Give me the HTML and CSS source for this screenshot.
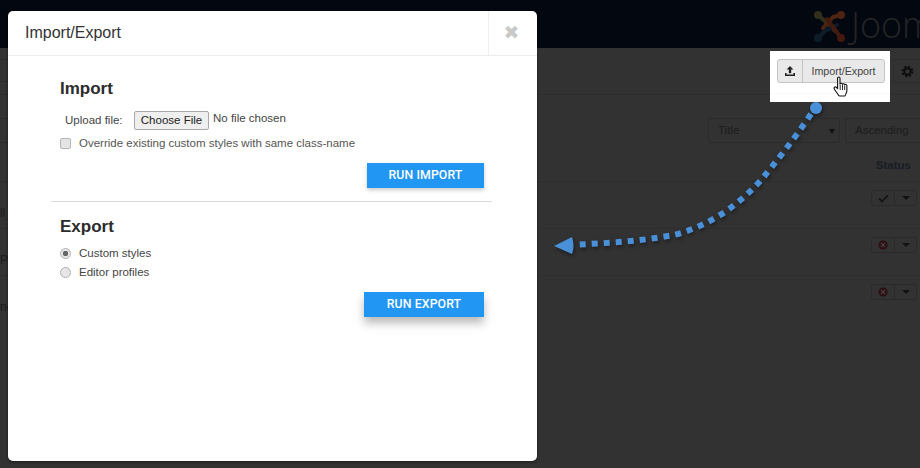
FILE: index.html
```html
<!DOCTYPE html>
<html lang="en">
<head>
<meta charset="utf-8">
<title>Import/Export</title>
<link rel="stylesheet" href="styles.css">
</head>
<body>
<div class="page">
  <header class="topbar">
    <svg class="joomla-mark" viewBox="0 0 33 33" width="33" height="33" aria-hidden="true">
      <g fill="none" stroke-width="4" stroke-linecap="round">
        <path d="M5 5 L14 13 L22 21" stroke="#2f2f1c"/>
        <path d="M28 5 L20 7 L10 18" stroke="#4d2412"/>
        <path d="M5 28 L12 21 L24 15" stroke="#0e1c2a"/>
        <path d="M28 28 L23 21 L14 9" stroke="#44190f"/>
      </g>
      <circle cx="5" cy="5" r="4" fill="#2f2f1c"/>
      <circle cx="28" cy="5" r="4" fill="#4d2412"/>
      <circle cx="5" cy="28" r="4" fill="#0e1c2a"/>
      <circle cx="28" cy="28" r="4" fill="#44190f"/>
    </svg>
    <span class="joomla-word">Joomla</span>
  </header>
  <div class="toolbar">
    <span class="left-box"></span>
    <span class="tool-btn">
      <svg viewBox="0 0 14 14" width="13" height="13" aria-hidden="true"><circle cx="7" cy="7" r="3.500" fill="none" stroke="#0c0c0c" stroke-width="2"/><circle cx="7" cy="7" r="5.300" fill="none" stroke="#0c0c0c" stroke-width="2" stroke-dasharray="2.160 2"/></svg>
    </span>
  </div>
  <div class="filters">
    <span class="left-strip"></span>
    <span class="select select-title">Title<i class="caret"></i></span>
    <span class="select select-order">Ascending</span>
  </div>
  <div class="table-head">Status</div>
  <div class="row">
    <span class="row-text">ll</span>
    <span class="status"><span class="status-icon"><svg viewBox="0 0 12 10" width="11" height="9" aria-hidden="true"><path d="M1 5l3.400 3.400L11 1.600" fill="none" stroke="#151515" stroke-width="2"/></svg></span><span class="status-drop"><i class="caret"></i></span></span>
  </div>
  <div class="row">
    <span class="row-text">Pr</span>
    <span class="status"><span class="status-icon"><svg viewBox="0 0 12 12" width="10" height="10" aria-hidden="true"><circle cx="6" cy="6" r="5.500" fill="#2c1012"/><path d="M3.500 3.500l5 5M8.500 3.500l-5 5" stroke="#4a4444" stroke-width="1.400"/></svg></span><span class="status-drop"><i class="caret"></i></span></span>
  </div>
  <div class="row row-last">
    <span class="row-text">nc</span>
    <span class="status"><span class="status-icon"><svg viewBox="0 0 12 12" width="10" height="10" aria-hidden="true"><circle cx="6" cy="6" r="5.500" fill="#2c1012"/><path d="M3.500 3.500l5 5M8.500 3.500l-5 5" stroke="#4a4444" stroke-width="1.400"/></svg></span><span class="status-drop"><i class="caret"></i></span></span>
  </div>
</div>

<section class="modal">
  <div class="modal-head">
    <h1 class="modal-title">Import/Export</h1>
    <span class="modal-close">&#x2716;</span>
  </div>
  <div class="modal-body">
    <h2 class="section-title">Import</h2>
    <div class="upload">
      <span class="upload-label">Upload file:</span>
      <span class="file-btn">Choose File</span>
      <span class="file-name">No file chosen</span>
    </div>
    <label class="check-line"><span class="checkbox"></span>Override existing custom styles with same class-name</label>
    <div class="actions actions-import"><span class="run-btn run-import">RUN IMPORT</span></div>
    <div class="rule"></div>
    <h2 class="section-title">Export</h2>
    <div class="radio-line radio-first"><span class="radio radio-on"></span>Custom styles</div>
    <div class="radio-line"><span class="radio"></span>Editor profiles</div>
    <div class="actions actions-export"><span class="run-btn run-export">RUN EXPORT</span></div>
  </div>
</section>

<div class="callout">
  <div class="btn-group">
    <span class="btn-icon"><svg viewBox="0 0 12 12" width="12" height="12" aria-hidden="true"><path fill="#222" d="M6 1l3.400 3.600H7.200v3.600H4.800V4.600H2.600zM1 8h1.600v1.600h6.800V8H11v3H1z"/></svg></span>
    <span class="btn-text">Import/Export</span>
  </div>
  <svg class="hand" viewBox="0 0 16 22" width="16" height="22" aria-hidden="true"><path d="M4.600 2.200c0-1.600 2.400-1.600 2.400 0v6c.3-1.400 2.300-1.300 2.400.2.400-1.100 2.200-.9 2.300.4.500-.8 2.200-.5 2.200.9v4.300c0 2.500-1 3.600-1.600 5.400-.1.400-.3.600-.8.600H6.700c-.5 0-.7-.2-1-.6C4.500 17.500 2.600 15.300 1.300 12.900c-.8-1.500.9-2.700 2.100-1.500l1.200 1.300z" fill="#fff" stroke="#111" stroke-width="1.100" stroke-linejoin="round"/><path d="M7.200 9v5M9.500 9v5M11.700 9.500V14" stroke="#111" stroke-width=".9" fill="none"/></svg>
</div>

<svg class="arrow" viewBox="0 0 920 468" width="920" height="468" aria-hidden="true">
  <path class="arrow-dots" d="M811 114 C793 141 775 163 762 179 C735 209 708 225 678 234 C645 241 610 243 578 244.500"/>
  <circle class="arrow-dot" cx="816" cy="108" r="6"/>
  <path class="arrow-dot" d="M554 246 L572 237 Q575 246 572 254 Z"/>
</svg>
</body>
</html>
```
FILE: styles.css
```css
* { box-sizing: border-box; }
html, body { margin: 0; padding: 0; }
body {
  width: 920px;
  height: 468px;
  overflow: hidden;
  position: relative;
  background: #333;
  font-family: "Liberation Sans", Arial, sans-serif;
  color: #333;
}
.page { width: 920px; height: 468px; background: #323232; }

.topbar {
  height: 48px;
  background: #03070f;
  display: flex;
  align-items: center;
  padding-left: 813px;
  overflow: hidden;
  white-space: nowrap;
}
.joomla-mark { flex: none; margin-top: 4px; }
.joomla-word {
  font-family: "Open Sans", sans-serif;
  font-weight: 300;
  font-size: 36px;
  color: #232527;
  margin-left: 5px;
}

.toolbar {
  height: 47px;
  border-bottom: 1px solid #2d2d2d;
  display: flex;
  justify-content: space-between;
  align-items: flex-start;
  padding-top: 11px;
}
.left-box {
  width: 9px;
  height: 23px;
  border: 1px solid #2c2c2c;
  border-left: 0;
}
.left-strip {
  height: 25px;
  width: 9px;
  border-top: 1px solid #2c2c2c;
  border-bottom: 1px solid #2c2c2c;
  margin-right: auto;
}
.tool-btn {
  width: 27px;
  height: 24px;
  border: 1px solid #2c2c2c;
  border-right: 0;
  border-radius: 3px 0 0 3px;
  display: flex;
  align-items: center;
  padding-left: 7px;
}

.filters {
  height: 62px;
  display: flex;
  justify-content: flex-end;
  gap: 5px;
  padding-top: 23px;
}
.select {
  height: 25px;
  border: 1px solid #2b2b2b;
  border-radius: 3px;
  font-size: 11.500px;
  line-height: 23px;
  padding-left: 9px;
  color: #1c1c1c;
  position: relative;
}
.select-title { width: 132px; }
.select-order { width: 75px; border-right: 0; border-radius: 3px 0 0 3px; }
.caret {
  display: inline-block;
  width: 0;
  height: 0;
  border-left: 4px solid transparent;
  border-right: 4px solid transparent;
  border-top: 4px solid #111;
}
.select .caret { position: absolute; right: 4px; top: 10px; border-left-width: 3px; border-right-width: 3px; border-top-width: 5px; }

.table-head {
  height: 25px;
  border-bottom: 1px solid #2d2d2d;
  font-size: 11.500px;
  font-weight: 700;
  text-align: right;
  color: #181c26;
  padding-right: 9px;
  line-height: 16px;
}
.row {
  height: 47px;
  border-bottom: 1px solid #2e2e2e;
  display: flex;
  justify-content: space-between;
  align-items: flex-start;
  padding: 8px 3px 0 0;
}
.row-last { border-bottom: 0; }
.row-text { font-size: 12px; color: #1c1c1c; margin-top: 16px; }
.status {
  display: flex;
  width: 46px;
  height: 16px;
  border: 1px solid #2a2a2a;
  border-radius: 3px;
}
.status-icon {
  width: 23px;
  border-right: 1px solid #2a2a2a;
  display: flex;
  align-items: center;
  justify-content: center;
}
.status-drop { flex: 1; display: flex; align-items: center; justify-content: center; }

.modal {
  position: absolute;
  left: 8px;
  top: 11px;
  width: 529px;
  height: 450px;
  background: #fff;
  border-radius: 5px;
  box-shadow: 0 1px 3px rgba(0, 0, 0, .5);
}
.modal-head {
  height: 45px;
  border-bottom: 1px solid #ececec;
  display: flex;
  justify-content: space-between;
}
.modal-title {
  margin: 0;
  padding-left: 17px;
  font-size: 16px;
  font-weight: 400;
  line-height: 43px;
  color: #333;
}
.modal-close {
  width: 49px;
  border-left: 1px solid #efefef;
  padding-right: 3px;
  text-align: center;
  font-size: 19px;
  line-height: 43px;
  color: #c9c9c9;
  font-family: "DejaVu Sans", sans-serif;
}
.modal-body { padding: 0 45px 0 43px; }
.section-title {
  margin: 0;
  padding-left: 9px;
  font-size: 17px;
  font-weight: 700;
  line-height: 20px;
  color: #2b2b2b;
}
.modal-body > .section-title:first-child { margin-top: 23px; }
.upload {
  display: flex;
  align-items: flex-start;
  margin-top: 12px;
  padding-left: 14px;
  font-size: 11.500px;
  color: #444;
}
.upload-label { margin-top: 3px; width: 69px; }
.file-btn {
  width: 75px;
  height: 19px;
  border: 1px solid #a9a9a9;
  border-radius: 2px;
  background: #efefef;
  color: #222;
  text-align: center;
  line-height: 17px;
}
.file-name { margin-left: 4px; color: #444; line-height: 14px; }
.check-line {
  display: flex;
  align-items: center;
  margin-top: 5px;
  padding-left: 9px;
  height: 16px;
  font-size: 11.500px;
  color: #555;
}
.checkbox {
  width: 11px;
  height: 11px;
  margin-right: 8px;
  border: 1px solid #b5b5b5;
  border-radius: 2px;
  background: #e4e4e4;
}
.actions { display: flex; justify-content: flex-end; padding-right: 8px; }
.actions-import { margin-top: 12px; }
.actions-export { margin-top: 12px; }
.run-btn {
  height: 25px;
  background: #2196f3;
  color: #fff;
  font-family: Roboto, sans-serif;
  font-weight: 500;
  font-size: 12.300px;
  line-height: 24px;
  text-align: center;
  letter-spacing: .1px;
}
.run-import { width: 117px; box-shadow: 0 2px 4px rgba(0, 0, 0, .22); }
.run-export { width: 120px; box-shadow: 0 6px 10px rgba(0, 0, 0, .28); }
.rule { height: 1px; background: #d9d9d9; margin-top: 13px; margin-bottom: 15px; }
.radio-line {
  display: flex;
  align-items: center;
  height: 16px;
  margin-top: 3px;
  padding-left: 9px;
  font-size: 11.500px;
  color: #444;
}
.radio-first { margin-top: 8px; }
.radio {
  width: 11px;
  height: 11px;
  margin-right: 8px;
  border: 1px solid #b0b0b0;
  border-radius: 50%;
  background: #e6e6e6;
}
.radio-on { background: radial-gradient(circle, #666 0 2.500px, #e6e6e6 3px); }

.callout {
  position: absolute;
  left: 770px;
  top: 51px;
  width: 120px;
  height: 51px;
  background: #fff;
  padding: 8px 5px 0 7px;
}
.callout::after {
  content: "";
  position: absolute;
  left: 0;
  right: 0;
  top: 42px;
  height: 1px;
  background: #f8f8f8;
}
.btn-group {
  display: flex;
  height: 24px;
  border: 1px solid #c4c4c4;
  border-radius: 3px;
  background: #e9e9e9;
  font-size: 10.700px;
  color: #444;
}
.btn-icon {
  width: 25px;
  border-right: 1px solid #c4c4c4;
  display: flex;
  align-items: center;
  justify-content: center;
}
.btn-text { flex: 1; text-align: center; line-height: 22px; }
.hand { position: absolute; left: 63px; top: 25px; z-index: 1; }

.arrow { position: absolute; left: 0; top: 0; pointer-events: none; filter: drop-shadow(1px 2px 2px rgba(0, 0, 0, .45)); }
.arrow-dots { fill: none; stroke: #4a90d9; stroke-width: 6; stroke-dasharray: 6 6; }
.arrow-dot { fill: #4a90d9; }
```
